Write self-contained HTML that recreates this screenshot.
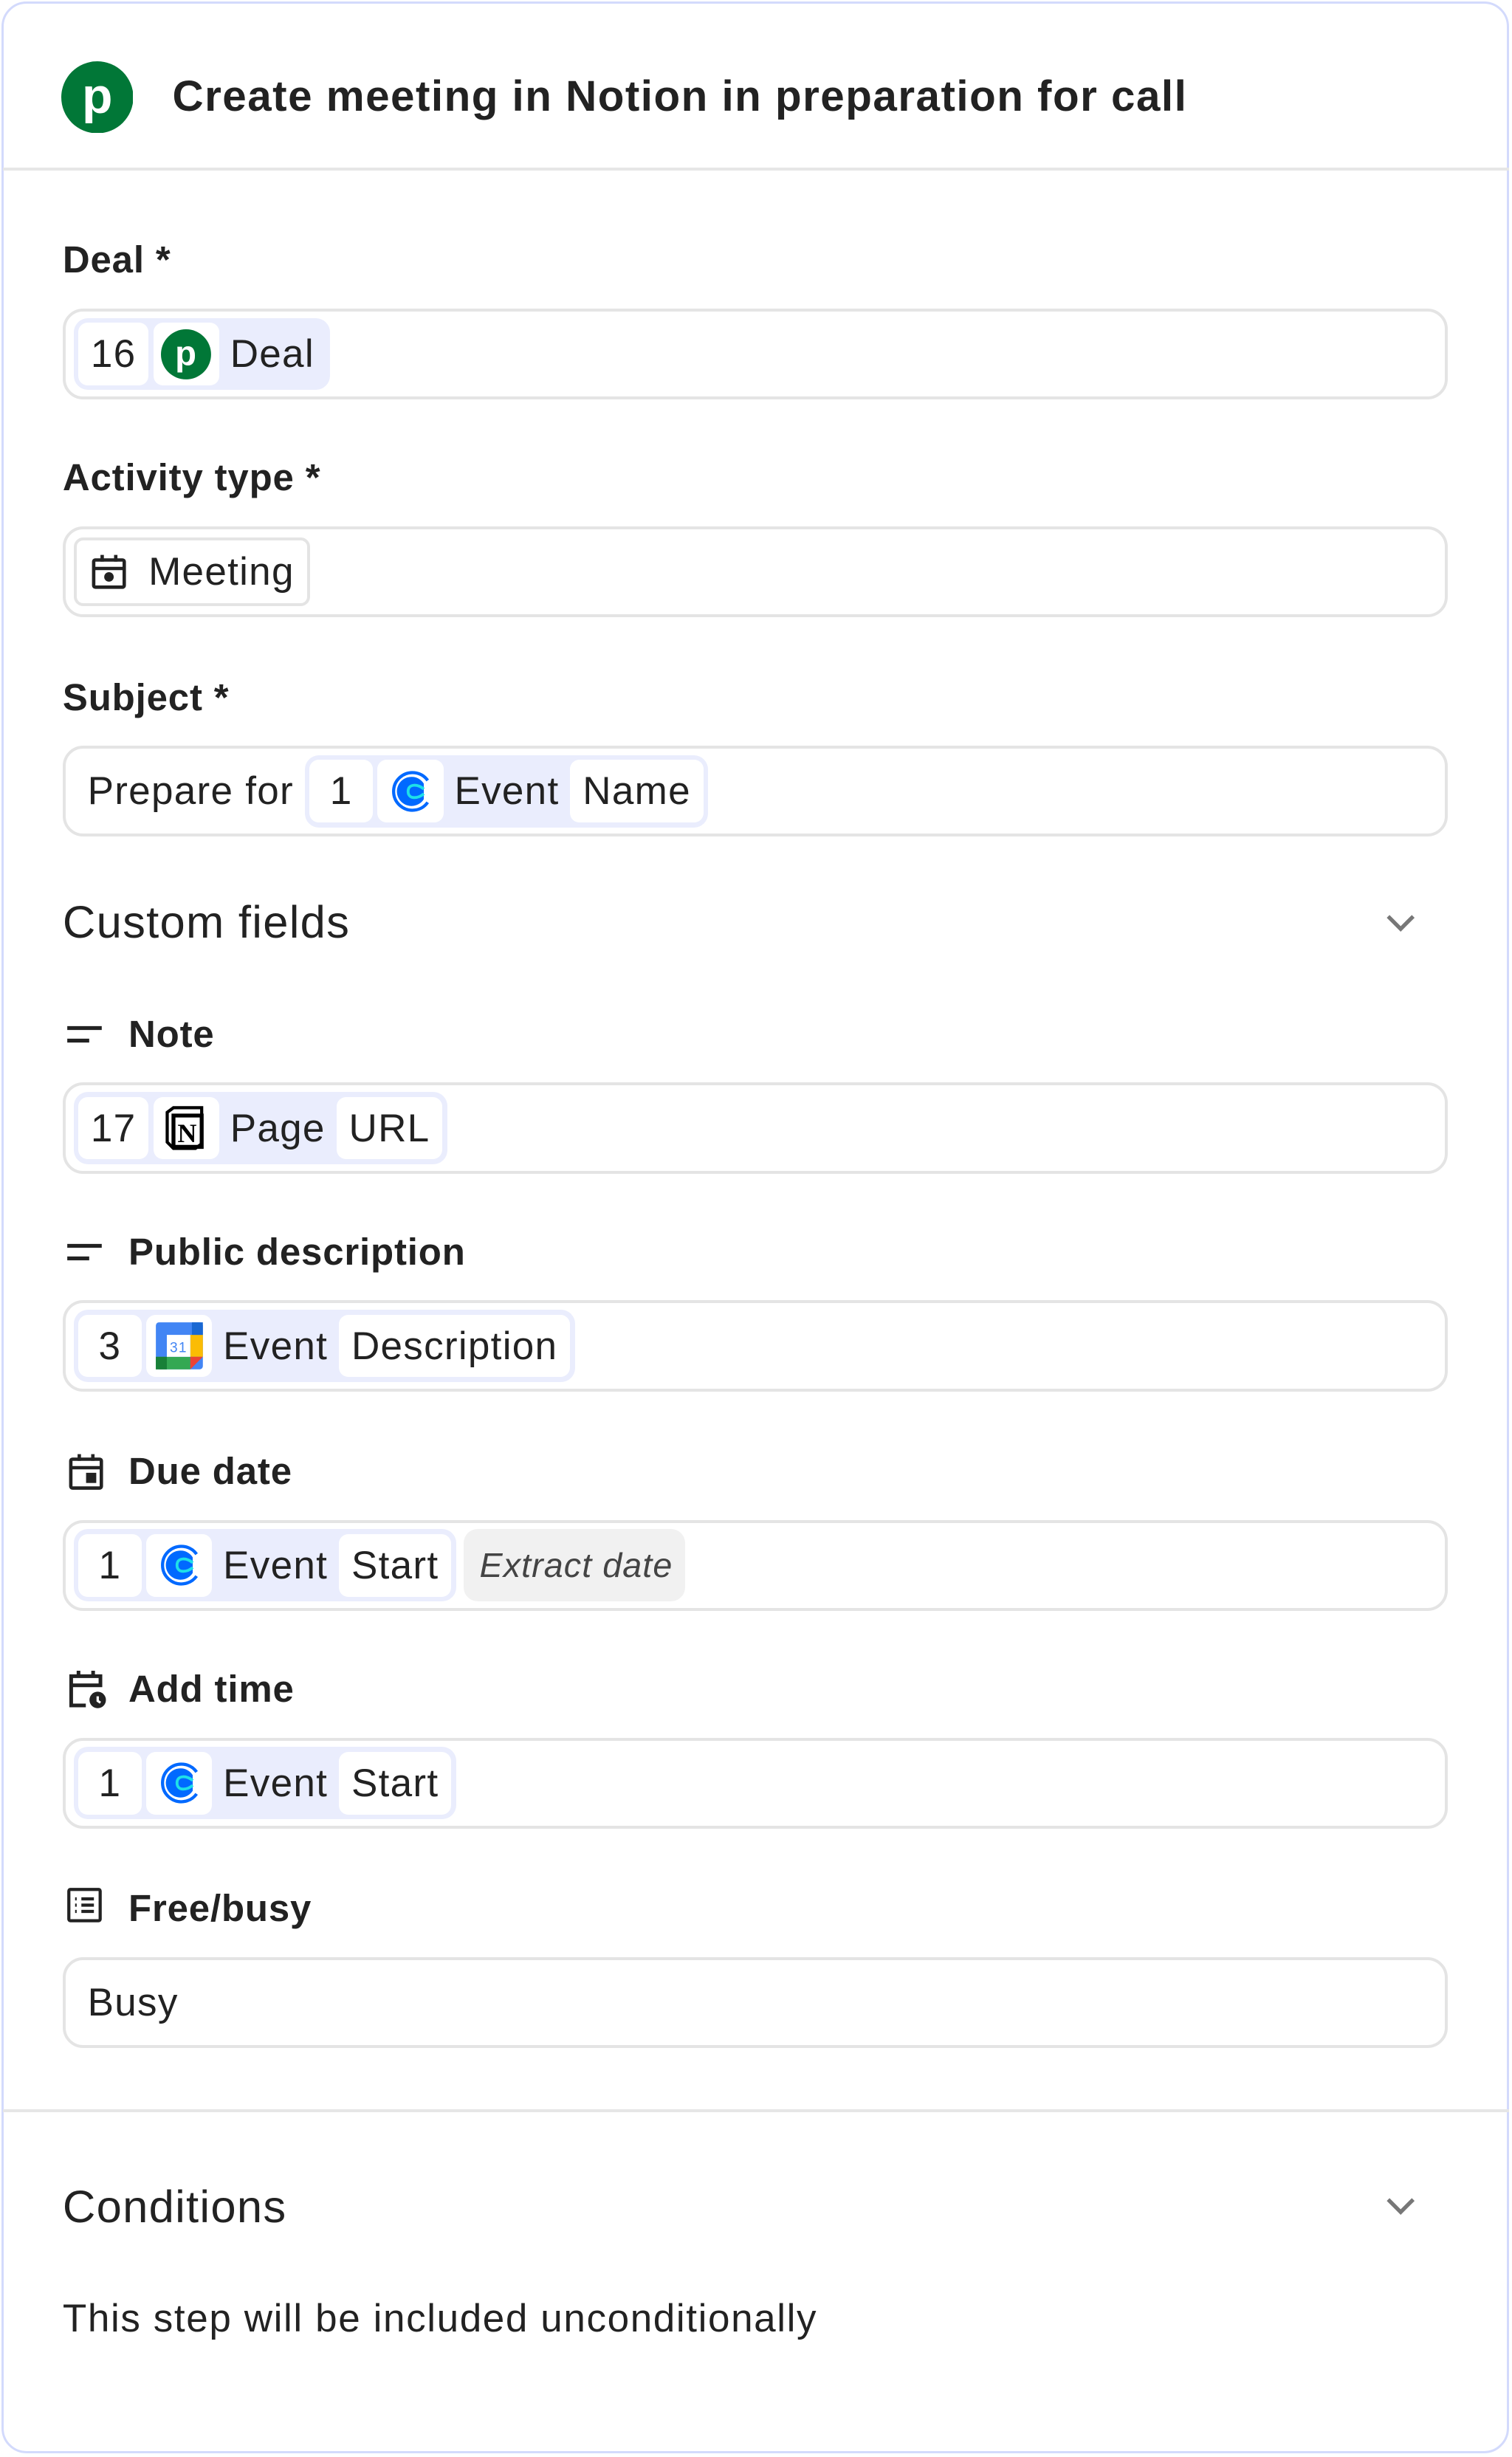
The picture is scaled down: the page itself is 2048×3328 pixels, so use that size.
<!DOCTYPE html>
<html><head><meta charset="utf-8"><style>
html,body{margin:0;padding:0;background:#fff;}
body{width:2048px;height:3328px;overflow:hidden;}
#w{zoom:2.12228;width:965px;height:1568px;position:relative;font-family:"Liberation Sans",sans-serif;color:#222;}
.card{position:absolute;left:1px;top:1px;width:962px;height:1565px;border:1.5px solid #d3dafc;border-radius:16px;box-sizing:border-box;}
.hr{position:absolute;left:2px;right:2px;height:2px;background:#e6e6e6;}
.lbl{position:absolute;left:40px;font-size:24px;font-weight:bold;line-height:30px;letter-spacing:0.4px;}
.lbl.i{left:82px;}
.inp{position:absolute;left:40px;width:884px;height:58px;border:2px solid #e4e4e4;border-radius:13px;box-sizing:border-box;display:flex;align-items:center;padding-left:5px;font-size:25px;letter-spacing:0.6px;}
.grp{display:flex;align-items:center;background:#eaedfd;border-radius:9px;padding:3px;height:46px;box-sizing:border-box;}
.w{background:#fff;border-radius:6px;height:40px;display:flex;align-items:center;padding:0 8px;}
.t{padding:0 7px;height:40px;display:flex;align-items:center;}
.sec{position:absolute;left:40px;font-size:29px;line-height:34px;letter-spacing:0.6px;}
.chev{position:absolute;left:884px;width:20px;height:12px;}
.ic{position:absolute;left:42px;}
</style></head><body><div id="w">
<div class="card"></div>
<svg style="position:absolute;left:39px;top:39px" width="46" height="46" viewBox="0 0 46 46"><circle cx="23" cy="23" r="23" fill="#017737"/><text x="23" y="33" text-anchor="middle" font-family="Liberation Sans" font-weight="bold" font-size="32" fill="#fff">p</text></svg>
<div style="position:absolute;left:110px;top:44px;font-size:27.5px;font-weight:bold;line-height:36px;letter-spacing:0.7px">Create meeting in Notion in preparation for call</div>
<div class="hr" style="top:107px"></div>

<div class="lbl" style="top:151px">Deal *</div>
<div class="inp" style="top:197px"><div class="grp"><div class="w">16</div><div class="w" style="padding:0 5px;margin-left:3px"><svg width="32" height="32" viewBox="0 0 46 46"><circle cx="23" cy="23" r="23" fill="#017737"/><text x="23" y="33" text-anchor="middle" font-family="Liberation Sans" font-weight="bold" font-size="32" fill="#fff">p</text></svg></div><div class="t">Deal</div></div></div>

<div class="lbl" style="top:290px">Activity type *</div>
<div class="inp" style="top:336px"><div class="w" style="border:2px solid #e4e4e4;height:44px;box-sizing:border-box;padding:0 8px 0 8px"><svg width="26" height="26" viewBox="0 0 24 24" fill="none" stroke="#222" stroke-width="2"><rect x="3" y="5" width="18" height="16" rx="1"/><path d="M3 10h18M8 2v4M16 2v4"/><circle cx="12" cy="15" r="1.8" fill="#222"/></svg><span style="margin-left:12px">Meeting</span></div></div>

<div class="lbl" style="top:430px">Subject *</div>
<div class="inp" style="top:476px;padding-left:14px"><span style="margin-right:7px">Prepare for</span><div class="grp"><div class="w" style="padding:0 13px">1</div><div class="w" style="padding:0 5px;margin-left:3px"><svg width="32" height="32" viewBox="0 0 32 32"><path d="M27 9A12 12 0 1 0 27 23" fill="none" stroke="#0069ff" stroke-width="2"/><path d="M24.5 11A9.3 9.3 0 1 0 24.5 21" fill="#0069ff"/><path d="M24.5 14.5c-3-3-10-4-10 1.5s7 4.5 10 1.5" fill="none" stroke="#1ee0e8" stroke-width="1.8"/></svg></div><div class="t">Event</div><div class="w">Name</div></div></div>

<div class="sec" style="top:572px">Custom fields</div>
<svg class="chev" style="top:583px" viewBox="0 0 20 12"><path d="M2 2l8 8 8-8" fill="none" stroke="#777" stroke-width="2.5"/></svg>

<svg class="ic" style="top:652px" width="24" height="16"><path d="M1 4h22M1 12h14" stroke="#222" stroke-width="2.5"/></svg>
<div class="lbl i" style="top:645px">Note</div>
<div class="inp" style="top:691px"><div class="grp"><div class="w">17</div><div class="w" style="padding:0 5px;margin-left:3px"><svg width="32" height="32" viewBox="0 0 32 32"><path d="M4 6l4-3h18v23l-4 3H8l-4-4z" fill="#fff" stroke="#000" stroke-width="2"/><path d="M8 8h18v20H8z" fill="none" stroke="#000" stroke-width="2.5"/><text x="17" y="25" text-anchor="middle" font-family="Liberation Serif" font-weight="bold" font-size="17">N</text></svg></div><div class="t">Page</div><div class="w">URL</div></div></div>

<svg class="ic" style="top:791px" width="24" height="16"><path d="M1 4h22M1 12h14" stroke="#222" stroke-width="2.5"/></svg>
<div class="lbl i" style="top:784px">Public description</div>
<div class="inp" style="top:830px"><div class="grp"><div class="w" style="padding:0 13px">3</div><div class="w" style="padding:0 5px;margin-left:3px"><svg width="32" height="32" viewBox="0 0 32 32"><rect x="1" y="1" width="30" height="30" rx="2" fill="#4285f4"/><rect x="1" y="23" width="22" height="8" fill="#34a853"/><rect x="1" y="23" width="7" height="8" fill="#188038"/><rect x="23" y="9" width="8" height="14" fill="#fbbc04"/><path d="M23 23h8l-8 8z" fill="#ea4335"/><rect x="24" y="1" width="7" height="8" fill="#1967d2"/><rect x="8" y="9" width="15" height="14" fill="#fff"/><text x="15.5" y="20" text-anchor="middle" font-size="9" font-family="Liberation Sans" fill="#4285f4">31</text></svg></div><div class="t">Event</div><div class="w">Description</div></div></div>

<svg class="ic" style="top:926px" width="26" height="26" viewBox="0 0 24 24" fill="none" stroke="#222" stroke-width="2"><rect x="3" y="5" width="18" height="17" rx="1"/><path d="M3 10h18M8 2v4M16 2v4"/><rect x="13" y="14" width="4" height="4" fill="#222"/></svg>
<div class="lbl i" style="top:924px">Due date</div>
<div class="inp" style="top:970px"><div class="grp"><div class="w" style="padding:0 13px">1</div><div class="w" style="padding:0 5px;margin-left:3px"><svg width="32" height="32" viewBox="0 0 32 32"><path d="M27 9A12 12 0 1 0 27 23" fill="none" stroke="#0069ff" stroke-width="2"/><path d="M24.5 11A9.3 9.3 0 1 0 24.5 21" fill="#0069ff"/><path d="M24.5 14.5c-3-3-10-4-10 1.5s7 4.5 10 1.5" fill="none" stroke="#1ee0e8" stroke-width="1.8"/></svg></div><div class="t">Event</div><div class="w">Start</div></div><div style="margin-left:5px;background:#f1f1f1;border-radius:9px;height:46px;display:flex;align-items:center;padding:0 8px 0 10px;font-style:italic;color:#444;font-size:22px;letter-spacing:0.5px">Extract date</div></div>

<svg class="ic" style="top:1064px" width="28" height="28" viewBox="0 0 24 24" fill="none" stroke="#222" stroke-width="2"><path d="M11 21H3V5h16v6M3 10h16M7 2v4M15 2v4"/><circle cx="17.5" cy="18" r="4.5" fill="#222" stroke="none"/><path d="M17.5 16v2.5l1.5 1" stroke="#fff" stroke-width="1.3"/></svg>
<div class="lbl i" style="top:1063px">Add time</div>
<div class="inp" style="top:1109px"><div class="grp"><div class="w" style="padding:0 13px">1</div><div class="w" style="padding:0 5px;margin-left:3px"><svg width="32" height="32" viewBox="0 0 32 32"><path d="M27 9A12 12 0 1 0 27 23" fill="none" stroke="#0069ff" stroke-width="2"/><path d="M24.5 11A9.3 9.3 0 1 0 24.5 21" fill="#0069ff"/><path d="M24.5 14.5c-3-3-10-4-10 1.5s7 4.5 10 1.5" fill="none" stroke="#1ee0e8" stroke-width="1.8"/></svg></div><div class="t">Event</div><div class="w">Start</div></div></div>

<svg class="ic" style="top:1204px" width="24" height="24" viewBox="0 0 24 24" fill="none" stroke="#222" stroke-width="2"><rect x="2" y="2" width="20" height="20" rx="1"/><path d="M10 8h8M10 12h8M10 16h8" /><path d="M6 8h1M6 12h1M6 16h1"/></svg>
<div class="lbl i" style="top:1203px">Free/busy</div>
<div class="inp" style="top:1249px;padding-left:14px">Busy</div>

<div class="hr" style="top:1346px"></div>
<div class="sec" style="top:1392px">Conditions</div>
<svg class="chev" style="top:1402px" viewBox="0 0 20 12"><path d="M2 2l8 8 8-8" fill="none" stroke="#777" stroke-width="2.5"/></svg>
<div style="position:absolute;left:40px;top:1465px;font-size:25px;line-height:30px;letter-spacing:0.75px">This step will be included unconditionally</div>
</div></body></html>
